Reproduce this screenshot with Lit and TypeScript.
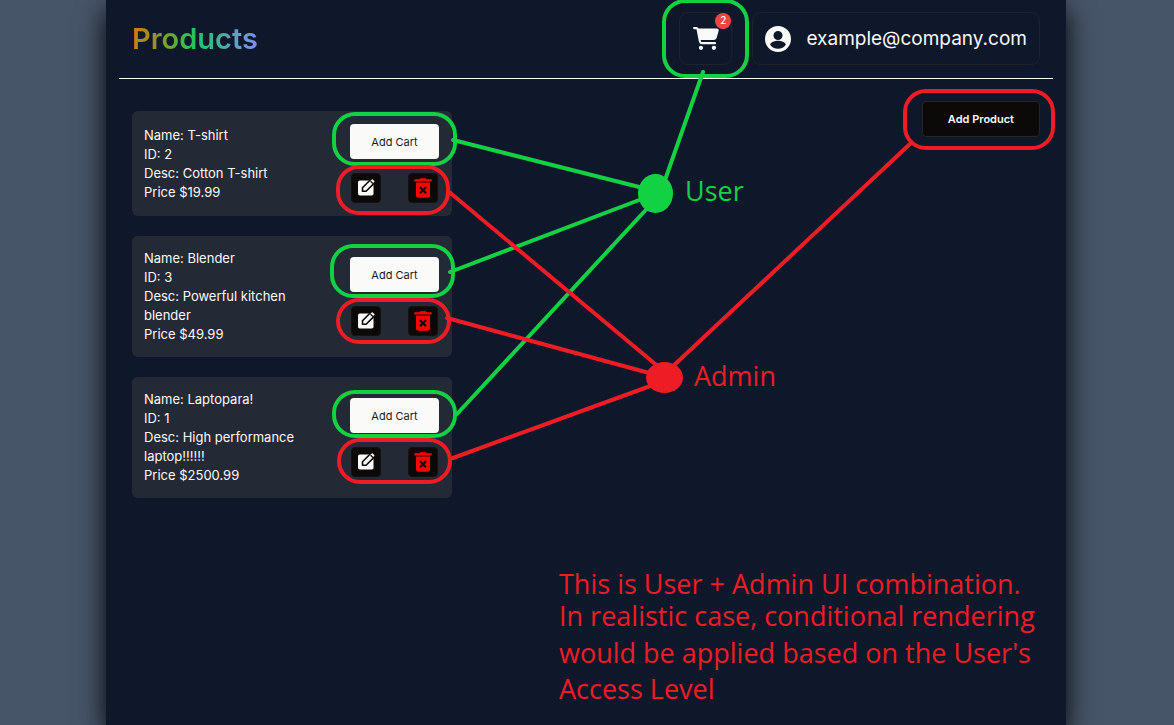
import { LitElement, html, css, svg } from "lit";
import { customElement, property } from "lit/decorators.js";

interface Product {
  id: number;
  name: string;
  desc: string;
  price: string;
}

const PRODUCTS: Product[] = [
  { id: 2, name: "T-shirt", desc: "Cotton T-shirt", price: "$19.99" },
  { id: 3, name: "Blender", desc: "Powerful kitchen blender", price: "$49.99" },
  { id: 1, name: "Laptopara!", desc: "High performance laptop!!!!!!", price: "$2500.99" },
];

@customElement("product-card")
export class ProductCard extends LitElement {
  @property({ attribute: false }) product!: Product;

  static styles = css`
    :host {
      display: flex;
      align-items: center;
      gap: 20px;
      padding: 13px 13px 13px 12px;
      border-radius: 6px;
      background: #242936;
      box-sizing: border-box;
    }
    .details {
      flex: 1;
      min-width: 0;
      font-size: 13px;
      font-weight: 400;
      line-height: 19px;
      color: #fafaf9;
    }
    .details p {
      margin: 0;
    }
    .actions {
      display: flex;
      flex-direction: column;
      gap: 14px;
      width: 89px;
    }
    .add {
      height: 35px;
      border: 0;
      border-radius: 4px;
      background: #fafaf9;
      color: #1c1917;
      font: 400 11px "Inter", sans-serif;
      cursor: pointer;
    }
    .tools {
      display: flex;
      justify-content: space-between;
      padding: 0 1px;
    }
    .tool {
      display: grid;
      place-items: center;
      width: 30px;
      height: 30px;
      padding: 0;
      border: 1px solid #15110f;
      border-radius: 4px;
      background: #0c0a09;
      color: #fafaf9;
      cursor: pointer;
    }
    .delete {
      color: #ff0000;
    }
    .pencil {
      fill: #fafaf9;
      stroke: #0c0a09;
      stroke-width: 1.6;
      stroke-linejoin: round;
    }
  `;

  render() {
    const p = this.product;
    return html`
      <div class="details">
        <p>${`Name: ${p.name}`}</p>
        <p>${`ID: ${p.id}`}</p>
        <p>${`Desc: ${p.desc}`}</p>
        <p>${`Price ${p.price}`}</p>
      </div>
      <div class="actions">
        <button class="add" type="button">Add Cart</button>
        <div class="tools">
          <button class="tool" type="button" aria-label="Edit ${p.name}">
            <svg width="20" height="20" viewBox="0 0 20 20" fill="currentColor">
              <rect x="2" y="2.500" width="15.500" height="15" rx="1.800" />
              <path class="pencil" d="M6.500 13.300V9.700L15.200 1a1.500 1.500 0 0 1 2.100 0l1.500 1.500a1.500 1.500 0 0 1 0 2.100L10.100 13.300z" />
              <path d="M14.600 3.200l2.300 2.300" stroke="#0c0a09" stroke-width="1.300" />
            </svg>
          </button>
          <button class="tool delete" type="button" aria-label="Delete ${p.name}">
            <svg width="26" height="26" viewBox="0 0 24 24" fill="currentColor">
              <path d="M5.500 19c0 1.100.9 2 2 2h9c1.100 0 2-.9 2-2V7h-13v12zm2.960-7.120 1.410-1.410L12 12.590l2.120-2.120 1.410 1.410L13.410 14l2.120 2.120-1.410 1.410L12 15.410l-2.120 2.120-1.410-1.410L10.590 14l-2.130-2.120zM15.500 4l-1-1h-5l-1 1H4v2h16V4z" />
            </svg>
          </button>
        </div>
      </div>
    `;
  }
}

const USER_FRAMES = [
  { x: 664, y: 1, w: 83, h: 75 },
  { x: 334, y: 114, w: 121, h: 50 },
  { x: 332, y: 246, w: 121, h: 50 },
  { x: 334, y: 392, w: 121, h: 44 },
];

const ADMIN_FRAMES = [
  { x: 905, y: 91, w: 148, h: 57 },
  { x: 338, y: 167, w: 110, h: 46 },
  { x: 338, y: 300, w: 111, h: 42 },
  { x: 339, y: 440, w: 111, h: 42 },
];

@customElement("role-diagram")
export class RoleDiagram extends LitElement {
  static styles = css`
    :host {
      position: absolute;
      inset: 0;
      pointer-events: none;
      font-family: "Open Sans", sans-serif;
      font-size: 27px;
    }
    .lines {
      position: absolute;
      top: 0;
      left: 0;
      fill: none;
      stroke-width: 4;
      stroke-linecap: round;
    }
    .user {
      stroke: #12d143;
    }
    .admin {
      stroke: #ee1c25;
    }
    .user .hub {
      fill: #12d143;
      stroke: none;
    }
    .admin .hub {
      fill: #ee1c25;
      stroke: none;
    }
    .label {
      position: absolute;
      line-height: 36px;
    }
    .label-user {
      left: 579px;
      top: 173px;
      color: #12d143;
    }
    .label-admin {
      left: 588px;
      top: 358px;
      color: #ee1c25;
    }
    .note {
      position: absolute;
      left: 453px;
      top: 568px;
      color: #ee1c25;
      white-space: nowrap;
    }
    .note p {
      margin: 0;
      line-height: 32px;
    }
    .note p + p {
      line-height: 36px;
      margin-top: 3px;
    }
  `;

  render() {
    const frame = (f: { x: number; y: number; w: number; h: number }) =>
      svg`<rect x=${f.x} y=${f.y} width=${f.w} height=${f.h} rx="21" />`;
    return html`
      <svg class="lines" width="960" height="725" viewBox="106 0 960 725" aria-hidden="true">
        <g class="user">
          ${USER_FRAMES.map(frame)}
          <path d="M703 72 665 180M453 140 655 191M450 272 655 194M457 414 655 200" />
          <ellipse class="hub" cx="655.5" cy="193.5" rx="17.5" ry="19.5" />
        </g>
        <g class="admin">
          ${ADMIN_FRAMES.map(frame)}
          <path d="M448 191 660 368M447 318 664 377M453 458 664 381M911 143 670 369" />
          <ellipse class="hub" cx="664.5" cy="377.5" rx="18.5" ry="15.5" />
        </g>
      </svg>
      <span class="label label-user">User</span>
      <span class="label label-admin">Admin</span>
      <div class="note">
        <p>This is User + Admin UI combination.<br />In realistic case, conditional rendering</p>
        <p>would be applied based on the User's<br />Access Level</p>
      </div>
    `;
  }
}

@customElement("app-root")
export class AppRoot extends LitElement {
  static styles = css`
    :host {
      display: block;
      min-height: 100vh;
      padding-right: 2px;
      box-sizing: border-box;
      overflow: hidden;
      background: #475569;
      font-family: "Inter", sans-serif;
    }
    .panel {
      position: relative;
      box-sizing: border-box;
      max-width: 960px;
      min-height: 100vh;
      margin: 0 auto;
      padding: 0 13px;
      background: #0f172a;
      box-shadow: 0 10px 26px #000;
    }
    .header {
      display: flex;
      align-items: center;
      gap: 20px;
      padding: 12px 13px 13px;
      border-bottom: 1px solid #fff;
    }
    .title {
      margin: 0 auto 0 0;
      font-size: 29px;
      font-weight: 600;
      line-height: 36px;
      background: linear-gradient(to right, #d97706, #22c55e, #818cf8);
      background-clip: text;
      -webkit-background-clip: text;
      color: transparent;
    }
    .cart,
    .account {
      position: relative;
      display: flex;
      align-items: center;
      box-sizing: border-box;
      height: 53px;
      border: 1px solid #1f2330;
      border-radius: 9px;
      background: transparent;
      color: #fafaf9;
      cursor: pointer;
    }
    .cart {
      justify-content: center;
      width: 53px;
      padding: 0;
    }
    .account {
      gap: 15px;
      padding: 0 12px;
      font: 400 19px "Inter", sans-serif;
    }
    .badge {
      position: absolute;
      top: 0;
      right: 0;
      width: 16px;
      height: 16px;
      border-radius: 50%;
      background: #ef4444;
      font: 500 10px/14px "Inter", sans-serif;
      text-align: center;
    }
    .toolbar {
      display: flex;
      align-items: flex-start;
      justify-content: space-between;
      padding: 22px 13px;
    }
    .list {
      display: grid;
      gap: 20px;
      width: 320px;
      padding-top: 10px;
    }
    .new {
      height: 36px;
      padding: 0 25px;
      border: 1px solid #292524;
      border-radius: 4px;
      background: #0c0a09;
      color: #fafaf9;
      font: 600 11px "Inter", sans-serif;
      cursor: pointer;
    }
  `;

  render() {
    return html`
      <main class="panel">
        <header class="header">
          <h1 class="title">Products</h1>
          <button class="cart" type="button" aria-label="Cart">
            <svg width="26" height="23" viewBox="0 0 576 512" fill="currentColor">
              <path d="M0 24C0 10.700 10.700 0 24 0H69.500c22 0 41.500 12.800 50.600 32h411c26.300 0 45.500 25 38.600 50.400l-41 152.300c-8.500 31.400-37 53.300-69.500 53.300H170.700l5.400 28.500c2.200 11.300 12.100 19.500 23.600 19.500H488c13.300 0 24 10.700 24 24s-10.700 24-24 24H199.700c-34.600 0-64.300-24.600-70.700-58.500L77.400 54.500c-.7-3.800-4-6.500-7.900-6.500H24C10.700 48 0 37.300 0 24zM128 464a48 48 0 1 1 96 0 48 48 0 1 1-96 0zm336-48a48 48 0 1 1 0 96 48 48 0 1 1 0-96z" />
            </svg>
            <span class="badge">2</span>
          </button>
          <button class="account" type="button">
            <svg width="26" height="26" viewBox="0 0 24 24" fill="currentColor" aria-hidden="true">
              <path fill-rule="evenodd" d="M12 0a12 12 0 1 0 0 24 12 12 0 0 0 0-24zm0 4.500a4.200 4.200 0 1 1 0 8.400 4.200 4.200 0 0 1 0-8.400zm0 16.500c-3.100 0-5.700-1.500-7.200-3.800.1-2.300 4.800-3.600 7.200-3.600s7.100 1.300 7.200 3.600c-1.500 2.300-4.100 3.800-7.200 3.800z" />
            </svg>
            <span>example@company.com</span>
          </button>
        </header>
        <section class="toolbar">
          <div class="list">
            ${PRODUCTS.map((p) => html`<product-card .product=${p}></product-card>`)}
          </div>
          <button class="new" type="button">Add Product</button>
        </section>
        <role-diagram></role-diagram>
      </main>
    `;
  }
}
